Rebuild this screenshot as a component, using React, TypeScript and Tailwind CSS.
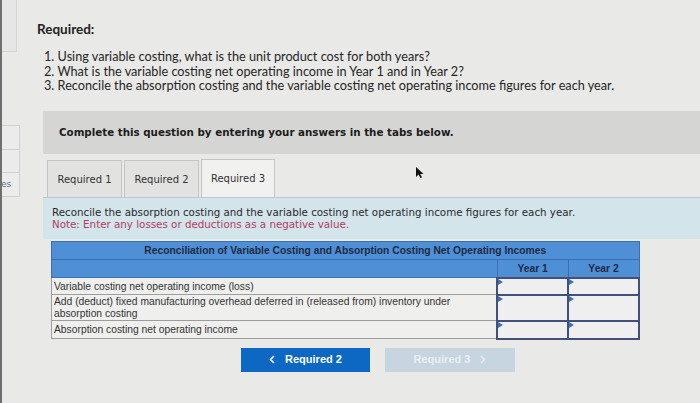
import React from "react";

function Marker() {
  return (
    <svg className="absolute left-0 top-0" width="5" height="6" viewBox="0 0 5 6">
      <path d="M0 0 L5 3 L0 6 Z" fill="#3d6fb5" />
    </svg>
  );
}

function InputCell({ h }: { h: string }) {
  return (
    <td className={`relative border-2 border-[#43507a] bg-[#efefef] p-0 ${h}`}>
      <Marker />
    </td>
  );
}

export default function App() {
  const sans = { fontFamily: "Lato, 'Open Sans', sans-serif" };
  const verd = { fontFamily: "'DejaVu Sans', Verdana, sans-serif" };
  const arial = { fontFamily: "'Liberation Sans', Arial, sans-serif" };
  return (
    <div className="w-[700px] h-[403px] overflow-hidden flex bg-[#e9e9e8] relative">
      {/* left dark edge */}
      <div className="w-[2px] h-full bg-[#6f6f6f]" />
      {/* sidebar */}
      <div className="w-[18px] h-full flex flex-col">
        <div className="h-[52px] mr-[3px] border-r border-b border-[#d3d3d3] bg-[#e6e6e6]" />
        <div className="h-[73px]" />
        <div className="h-[25px] border-t border-r border-b border-[#d0d0d0] bg-[#ebebeb]" />
        <div className="h-[23px] border-r border-b border-[#d0d0d0] bg-[#ebebeb]" />
        <div className="h-[24px] border-r border-b border-[#d0d0d0] bg-[#ececec] flex items-center">
          <span className="text-[9px] text-[#5a6b80] -ml-[1px]" style={verd}>es</span>
        </div>
      </div>
      {/* main */}
      <div className="flex-1 flex flex-col">
        <div className="pt-[20px] pl-[17px] text-[13.5px] font-bold text-[#222] leading-[18px]" style={sans}>
          Required:
        </div>
        <ol className="mt-[11px] pl-[24px] text-[12.7px] text-[#262626] leading-[14.5px]" style={sans}>
          <li>1. Using variable costing, what is the unit product cost for both years?</li>
          <li>2. What is the variable costing net operating income in Year 1 and in Year 2?</li>
          <li>3. Reconcile the absorption costing and the variable costing net operating income figures for each year.</li>
        </ol>
        <div className="mt-[18.5px] ml-[23px] h-[43px] bg-[#d5d5d4] flex items-center pl-[16px]">
          <span className="text-[10.3px] font-bold text-[#1c1c1c]" style={verd}>
            Complete this question by entering your answers in the tabs below.
          </span>
        </div>
        {/* tabs */}
        <div className="mt-[5px] ml-[27px] h-[38px] flex items-end gap-[2px]">
          <div className="w-[75px] h-[37px] border border-b-0 border-[#c4c4c4] bg-[#e2e2e1] flex items-center justify-center text-[10px] text-[#333]" style={verd}>
            Required 1
          </div>
          <div className="w-[75px] h-[37px] border border-b-0 border-[#c4c4c4] bg-[#e2e2e1] flex items-center justify-center text-[10px] text-[#333]" style={verd}>
            Required 2
          </div>
          <div className="w-[74px] h-[38px] border border-b-0 border-[#c4c4c4] bg-[#f1f1f0] flex items-center justify-center text-[10px] text-[#333]" style={verd}>
            Required 3
          </div>
        </div>
        {/* blue panel */}
        <div className="ml-[23px] h-[42px] bg-[#d3e4ea] border-t border-[#b9c9cf] pl-[9px] pt-[8px] text-[10.3px] leading-[12px]" style={verd}>
          <div className="text-[#2a2a2a]">Reconcile the absorption costing and the variable costing net operating income figures for each year.</div>
          <div className="text-[#b0405c]">Note: Enter any losses or deductions as a negative value.</div>
        </div>
        {/* table */}
        <table className="mt-[2px] ml-[31px] w-[589px] border-collapse text-[10.3px]" style={arial}>
          <tbody>
            <tr className="h-[18px] bg-[#4e8fd5]">
              <td colSpan={3} className="border border-[#3d6fae] text-center font-bold text-[#1d2b45] leading-[16px]">
                Reconciliation of Variable Costing and Absorption Costing Net Operating Incomes
              </td>
            </tr>
            <tr className="h-[18px] bg-[#4e8fd5]">
              <td className="w-[446px] border border-[#3d6fae]" />
              <td className="w-[71px] border border-[#3d6fae] text-center font-bold text-[#1d2b45]">Year 1</td>
              <td className="w-[71px] border border-[#3d6fae] text-center font-bold text-[#1d2b45]">Year 2</td>
            </tr>
            <tr>
              <td className="h-[17px] border border-[#9d9d9d] bg-[#efefee] pl-[2px] align-bottom text-[#333] leading-[12px] pb-[1px]">
                Variable costing net operating income (loss)
              </td>
              <InputCell h="h-[17px]" />
              <InputCell h="h-[17px]" />
            </tr>
            <tr>
              <td className="h-[26px] border border-[#9d9d9d] bg-[#efefee] pl-[2px] text-[#333] leading-[12px]">
                Add (deduct) fixed manufacturing overhead deferred in (released from) inventory under
                <br />
                absorption costing
              </td>
              <InputCell h="h-[26px]" />
              <InputCell h="h-[26px]" />
            </tr>
            <tr>
              <td className="h-[18px] border border-[#9d9d9d] bg-[#efefee] pl-[2px] text-[#333] leading-[12px]">
                Absorption costing net operating income
              </td>
              <InputCell h="h-[18px]" />
              <InputCell h="h-[18px]" />
            </tr>
          </tbody>
        </table>
        {/* buttons */}
        <div className="mt-[8px] ml-[221px] flex gap-[15px]">
          <div className="w-[129px] h-[24px] bg-[#0c68c2] flex items-center justify-center gap-[10px] text-white font-bold text-[11px]" style={arial}>
            <svg width="6" height="9" viewBox="0 0 6 9">
              <path d="M5 1 L1.5 4.5 L5 8" stroke="white" strokeWidth="1.6" fill="none" />
            </svg>
            <span>Required 2</span>
          </div>
          <div className="w-[130px] h-[24px] bg-[#c7d5e0] flex items-center justify-center gap-[10px] text-[#e9eff4] font-bold text-[11px]" style={arial}>
            <span>Required 3</span>
            <svg width="6" height="9" viewBox="0 0 6 9">
              <path d="M1 1 L4.5 4.5 L1 8" stroke="#e9eff4" strokeWidth="1.4" fill="none" />
            </svg>
          </div>
        </div>
      </div>
      {/* mouse cursor */}
      <svg className="absolute left-[415px] top-[166px]" width="9" height="13" viewBox="0 0 9 13">
        <path d="M1 1 L1 11 L3.5 8.5 L5.5 12 L7 11.3 L5.2 8 L8.5 8 Z" fill="#111" />
      </svg>
    </div>
  );
}
